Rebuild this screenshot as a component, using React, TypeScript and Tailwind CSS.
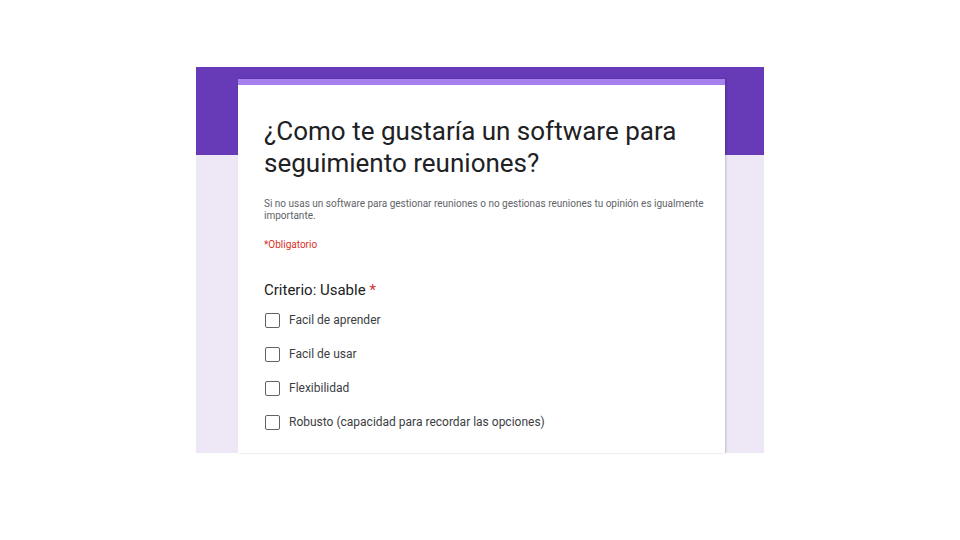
import React from "react";

const options = [
  "Facil de aprender",
  "Facil de usar",
  "Flexibilidad",
  "Robusto (capacidad para recordar las opciones)",
];

export default function App() {
  return (
    <div className="w-[960px] h-[540px] bg-white font-['Roboto',_sans-serif] pt-[67px] pl-[196px]">
      <div className="w-[568px] h-[386px] bg-[linear-gradient(#673ab7_0_88px,#ede7f6_88px)] pt-[12px] pl-[42px] flex flex-col">
        <div className="w-[487px] flex-1 bg-white border-t-[6px] border-[#a780ef] shadow-[1px_0_2px_rgba(0,0,0,0.2)] overflow-hidden pl-[26px] pr-[20px] pt-[30px]">
          <h1 className="text-[26px] leading-[32px] text-[#202124] font-normal">
            ¿Como te gustaría un software para seguimiento reuniones?
          </h1>
          <p className="mt-[19px] text-[10px] leading-[12px] text-[#5f6368]">
            Si no usas un software para gestionar reuniones o no gestionas reuniones tu opinión es igualmente importante.
          </p>
          <p className="mt-[17px] text-[10px] leading-[12px] text-[#d93025]">*Obligatorio</p>
          <h2 className="mt-[29px] text-[15px] leading-[20px] text-[#202124]">
            Criterio: Usable <span className="text-[#d93025]">*</span>
          </h2>
          <div className="mt-[3px] flex flex-col">
            {options.map((o) => (
              <label key={o} className="h-[34px] flex items-center gap-[9px]">
                <span className="ml-[1px] w-[15px] h-[15px] border-[1.5px] border-[#5f6368] rounded-[2px]" />
                <span className="text-[12px] text-[#3c4043]">{o}</span>
              </label>
            ))}
          </div>
        </div>
      </div>
    </div>
  );
}
